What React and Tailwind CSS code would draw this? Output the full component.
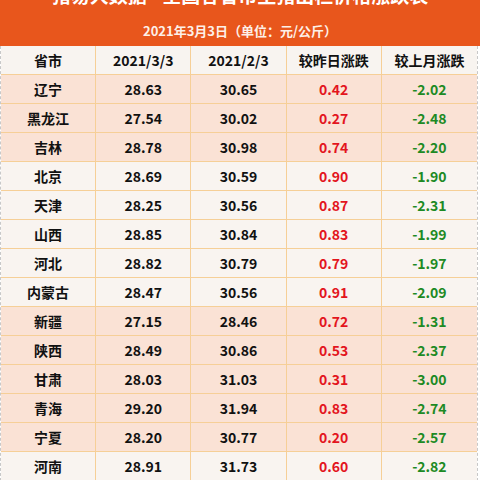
import React from "react";

const rows = [
  ["辽宁", "28.63", "30.65", "0.42", "-2.02", true],
  ["黑龙江", "27.54", "30.02", "0.27", "-2.48", true],
  ["吉林", "28.78", "30.98", "0.74", "-2.20", true],
  ["北京", "28.69", "30.59", "0.90", "-1.90", false],
  ["天津", "28.25", "30.56", "0.87", "-2.31", false],
  ["山西", "28.85", "30.84", "0.83", "-1.99", false],
  ["河北", "28.82", "30.79", "0.79", "-1.97", false],
  ["内蒙古", "28.47", "30.56", "0.91", "-2.09", false],
  ["新疆", "27.15", "28.46", "0.72", "-1.31", true],
  ["陕西", "28.49", "30.86", "0.53", "-2.37", true],
  ["甘肃", "28.03", "31.03", "0.31", "-3.00", true],
  ["青海", "29.20", "31.94", "0.83", "-2.74", true],
  ["宁夏", "28.20", "30.77", "0.20", "-2.57", true],
  ["河南", "28.91", "31.73", "0.60", "-2.82", false],
];

const font = { fontFamily: '"Noto Sans CJK SC", "Noto Sans", sans-serif' };

export default function App() {
  return (
    <div className="w-[480px] h-[480px] overflow-hidden bg-white" style={font}>
      <div className="h-[46px] bg-[#e8561c] flex flex-col items-center overflow-hidden">
        <div className="mt-[-20px] h-[30px] text-white font-bold text-[19px] leading-[30px] whitespace-nowrap">
          猪易大数据 - 全国各省市生猪出栏价格涨跌表
        </div>
        <div className="mt-[12px] font-bold text-[13px] leading-[18px] whitespace-nowrap text-[#fdf0e8]">
          2021年3月3日（单位：元/公斤）
        </div>
      </div>
      <div className="border-x border-dashed border-[#c8c8c8] mr-[2px]">
        <div className="grid grid-cols-5 h-[29px] bg-[#f8f4f0] border-b border-[#f6cf97] text-[14px] font-bold text-[#111]">
          {["省市", "2021/3/3", "2021/2/3", "较昨日涨跌", "较上月涨跌"].map((h, i) => (
            <div
              key={h}
              className={
                "flex items-center justify-center " +
                (i < 4 ? "border-r border-[#f6cf97]" : "")
              }
            >
              {h}
            </div>
          ))}
        </div>
        {rows.map(([p, a, b, c, d, peach]) => (
          <div
            key={p}
            className={
              "grid grid-cols-5 h-[29px] border-b border-[#f6cf97] text-[14px] font-bold " +
              (peach ? "bg-[#fae2d5]" : "bg-[#f9f4f0]")
            }
          >
            <div className="flex items-center justify-center border-r border-[#f6cf97] text-[#111]">{p}</div>
            <div className="flex items-center justify-center border-r border-[#f6cf97] text-[#111]">{a}</div>
            <div className="flex items-center justify-center border-r border-[#f6cf97] text-[#111]">{b}</div>
            <div className="flex items-center justify-center border-r border-[#f6cf97] text-[#e3151d]">{c}</div>
            <div className="flex items-center justify-center text-[#1d8a24]">{d}</div>
          </div>
        ))}
      </div>
    </div>
  );
}
